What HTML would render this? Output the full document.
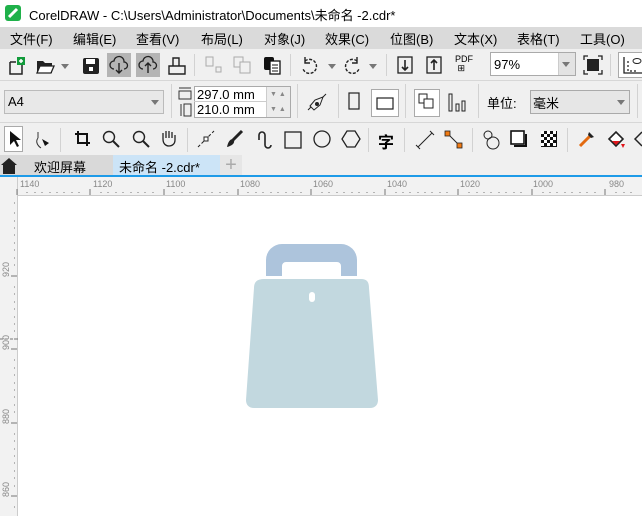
<!DOCTYPE html><html><head><meta charset="utf-8"><style>
*{margin:0;padding:0;box-sizing:border-box}
body{width:642px;height:516px;overflow:hidden;background:#fff;font-family:"Liberation Sans","Noto Sans CJK SC",sans-serif;position:relative;font-size:13px;color:#000}
.a{position:absolute}
.t{font-size:14px}
svg{position:absolute;overflow:visible}
.sep{position:absolute;width:1px;background:#d2d2d2}
.tri{position:absolute;width:0;height:0;border-left:4px solid transparent;border-right:4px solid transparent;border-top:5px solid #777}
.rl{position:absolute;font-size:9px;color:#888;top:178px}
</style></head><body>
<!-- title -->
<div class="a" style="left:0;top:0;width:642px;height:27px;background:#fff"></div>
<div class="a" style="left:5px;top:5px;width:16px;height:16px;background:#1fb14a;border-radius:3px"></div>
<svg style="left:5px;top:5px" width="16" height="16"><path d="M4 12 L12 4" stroke="#fff" stroke-width="3"/></svg>
<div class="a t" style="left:29px;top:5px;font-size:13px">CorelDRAW - C:\Users\Administrator\Documents\未命名 -2.cdr*</div>
<!-- menu -->
<div class="a" style="left:0;top:27px;width:642px;height:22px;background:#dadada"></div>
<div class="a" style="top:29px;left:0;width:642px;font-size:13px">
<span class="a" style="left:10px">文件(F)</span><span class="a" style="left:73px">编辑(E)</span><span class="a" style="left:136px">查看(V)</span><span class="a" style="left:201px">布局(L)</span><span class="a" style="left:264px">对象(J)</span><span class="a" style="left:325px">效果(C)</span><span class="a" style="left:390px">位图(B)</span><span class="a" style="left:454px">文本(X)</span><span class="a" style="left:517px">表格(T)</span><span class="a" style="left:580px">工具(O)</span></div>
<!-- toolbars bg -->
<div class="a" style="left:0;top:49px;width:642px;height:106px;background:#f0f0f0"></div>
<div class="a" style="left:0;top:80px;width:642px;height:1px;background:#d7d7d7"></div>
<div class="a" style="left:0;top:122px;width:642px;height:1px;background:#d7d7d7"></div>
<!-- row1 icons -->
<svg style="left:7px;top:57px" width="18" height="18"><path d="M3 5h6l0 0M3 5v12h12V8" fill="none" stroke="#222" stroke-width="1.5"/><rect x="10" y="0" width="8" height="8" fill="#129b3b"/><path d="M14 2v4M12 4h4" stroke="#fff" stroke-width="1.5"/></svg>
<svg style="left:36px;top:58px" width="20" height="16"><path d="M1 3h6l2 2h7v10H1z" fill="#222"/><path d="M4 8h14l-3 7H1z" fill="#fff" stroke="#222" stroke-width="1.3"/></svg>
<div class="tri" style="left:61px;top:64px"></div>
<svg style="left:82px;top:57px" width="18" height="18"><rect x="1" y="1" width="16" height="16" rx="2" fill="#222"/><rect x="4" y="2" width="9" height="5" fill="#fff"/><rect x="7" y="10" width="4" height="4" fill="#fff"/></svg>
<div class="a" style="left:107px;top:53px;width:24px;height:24px;background:#b4b4b4"></div>
<div class="a" style="left:136px;top:53px;width:24px;height:24px;background:#b4b4b4"></div>
<svg style="left:109px;top:55px" width="20" height="20"><path d="M5 14a4 4 0 0 1 0-8 5 5 0 0 1 10 1 3.5 3.5 0 0 1 0 7" fill="none" stroke="#222" stroke-width="1.3"/><path d="M10 8v10M7 15l3 3 3-3" fill="none" stroke="#222" stroke-width="1.4"/></svg>
<svg style="left:138px;top:55px" width="20" height="20"><path d="M5 14a4 4 0 0 1 0-8 5 5 0 0 1 10 1 3.5 3.5 0 0 1 0 7" fill="none" stroke="#222" stroke-width="1.3"/><path d="M10 18V8M7 11l3-3 3 3" fill="none" stroke="#222" stroke-width="1.4"/></svg>
<svg style="left:168px;top:57px" width="18" height="18"><path d="M5 9V1h6v8M1 17V9h16v8z" fill="none" stroke="#222" stroke-width="1.4"/></svg>
<div class="sep" style="left:194px;top:54px;height:22px"></div>
<svg style="left:206px;top:57px" width="16" height="16"><rect x="0" y="0" width="7" height="9" fill="none" stroke="#aaa"/><rect x="10" y="10" width="5" height="5" fill="none" stroke="#aaa"/></svg>
<svg style="left:234px;top:57px" width="18" height="18"><rect x="0" y="0" width="9" height="10" fill="none" stroke="#aaa"/><rect x="6" y="5" width="10" height="11" fill="#f0f0f0" stroke="#aaa"/></svg>
<svg style="left:263px;top:56px" width="18" height="18"><rect x="1" y="1" width="10" height="13" rx="2" fill="#111"/><rect x="7" y="5" width="10" height="13" fill="#fff" stroke="#111" stroke-width="1.3"/><path d="M9 9h6M9 12h6M9 15h6" stroke="#111"/></svg>
<div class="sep" style="left:290px;top:54px;height:22px"></div>
<svg style="left:300px;top:57px" width="18" height="18"><path d="M5 4a7 7 0 1 1-2 8" fill="none" stroke="#222" stroke-width="1.4" stroke-dasharray="3 1.5"/><path d="M5 0v6h5" fill="none" stroke="#222" stroke-width="1.4"/></svg>
<div class="tri" style="left:328px;top:64px"></div>
<svg style="left:344px;top:57px" width="18" height="18"><path d="M13 4a7 7 0 1 0 2 8" fill="none" stroke="#222" stroke-width="1.4" stroke-dasharray="3 1.5"/><path d="M13 0v6H8" fill="none" stroke="#222" stroke-width="1.4"/></svg>
<div class="tri" style="left:369px;top:64px"></div>
<div class="sep" style="left:386px;top:54px;height:22px"></div>
<svg style="left:397px;top:56px" width="18" height="18"><rect x="1" y="1" width="14" height="16" fill="none" stroke="#222" stroke-width="1.3"/><path d="M8 4v10M5 11l3 3 3-3" fill="none" stroke="#222" stroke-width="1.6"/></svg>
<svg style="left:426px;top:56px" width="18" height="18"><rect x="1" y="1" width="14" height="16" fill="none" stroke="#222" stroke-width="1.3"/><path d="M8 14V4M5 7l3-3 3 3" fill="none" stroke="#222" stroke-width="1.6"/></svg>
<div class="a" style="left:455px;top:55px;font-size:9px;line-height:9px">PDF<br>&nbsp;⊞</div>
<div class="a" style="left:490px;top:52px;width:86px;height:24px;border:1px solid #aaa;background:#fff"></div>
<div class="a" style="left:558px;top:53px;width:17px;height:22px;background:#e3e3e3;border-left:1px solid #ccc"></div>
<div class="tri" style="left:562px;top:62px"></div>
<div class="a" style="left:494px;top:57px;font-size:13px">97%</div>
<svg style="left:584px;top:56px" width="18" height="18"><rect x="3" y="3" width="12" height="12" fill="#222"/><path d="M0 4V0h4M14 0h4v4M18 14v4h-4M4 18H0v-4" fill="none" stroke="#222" stroke-width="1.3"/></svg>
<div class="sep" style="left:610px;top:54px;height:22px"></div>
<div class="a" style="left:618px;top:52px;width:26px;height:26px;border:1px solid #aaa;background:#fff"></div>
<svg style="left:622px;top:56px" width="20" height="18"><path d="M2 1v16h18M5 14h2M5 10h2M5 6h2M9 14v2M13 14v2" fill="none" stroke="#222" stroke-width="1.3"/><ellipse cx="15" cy="5" rx="4" ry="2.5" fill="none" stroke="#222"/></svg>
<!-- row2 -->
<div class="a" style="left:4px;top:90px;width:160px;height:24px;border:1px solid #bbb;background:#e8e8e8"></div>
<div class="a" style="left:8px;top:94px;font-size:13px">A4</div>
<div class="tri" style="left:151px;top:100px"></div>
<div class="sep" style="left:171px;top:84px;height:34px"></div>
<svg style="left:178px;top:87px" width="14" height="30"><path d="M1 1h12M1 4h12v8H1z M3 17v12M6 17h7v12H6z" fill="none" stroke="#333"/></svg>
<div class="a" style="left:194px;top:86px;width:97px;height:32px;border:1px solid #aaa;background:#fff"></div>
<div class="a" style="left:194px;top:101px;width:73px;height:1px;background:#ccc"></div>
<div class="a" style="left:266px;top:87px;width:24px;height:30px;background:#ececec;border-left:1px solid #ccc;font-size:7px;color:#888;line-height:15px;padding-left:3px">▼ ▲<br>▼ ▲</div>
<div class="a" style="left:197px;top:87px;font-size:13px">297.0 mm</div>
<div class="a" style="left:197px;top:102px;font-size:13px">210.0 mm</div>
<div class="sep" style="left:297px;top:84px;height:34px"></div>
<svg style="left:308px;top:94px" width="18" height="18"><path d="M2 12l5-6 8-3-3 8-6 5z" fill="none" stroke="#222"/><circle cx="9" cy="10" r="2" fill="#222"/><path d="M0 16l3-3M14 4l4-4" stroke="#222"/></svg>
<div class="sep" style="left:338px;top:84px;height:34px"></div>
<svg style="left:348px;top:92px" width="14" height="20"><rect x="1" y="1" width="10" height="16" fill="none" stroke="#222" stroke-width="1.2"/></svg>
<div class="a" style="left:371px;top:89px;width:28px;height:28px;border:1px solid #aaa;background:#fff"></div>
<svg style="left:376px;top:97px" width="20" height="14"><rect x="1" y="1" width="16" height="11" fill="none" stroke="#222" stroke-width="1.2"/></svg>
<div class="sep" style="left:405px;top:84px;height:34px"></div>
<div class="a" style="left:414px;top:89px;width:26px;height:28px;border:1px solid #aaa;background:#fff"></div>
<svg style="left:418px;top:93px" width="20" height="20"><rect x="1" y="1" width="8" height="9" fill="#fff" stroke="#222"/><rect x="6" y="6" width="9" height="9" fill="#fff" stroke="#222"/></svg>
<svg style="left:448px;top:93px" width="20" height="20"><rect x="1" y="1" width="3" height="17" fill="none" stroke="#222"/><rect x="8" y="11" width="3" height="7" fill="none" stroke="#222"/><rect x="14" y="8" width="3" height="10" fill="none" stroke="#222"/></svg>
<div class="sep" style="left:478px;top:84px;height:34px"></div>
<div class="a" style="left:487px;top:93px;font-size:13px">单位:</div>
<div class="a" style="left:530px;top:90px;width:100px;height:24px;border:1px solid #aaa;background:#e6e6e6"></div>
<div class="a" style="left:533px;top:93px;font-size:13px">毫米</div>
<div class="tri" style="left:617px;top:100px"></div>
<div class="sep" style="left:637px;top:84px;height:34px"></div>
<!-- row3 toolbox -->
<div class="a" style="left:4px;top:126px;width:19px;height:26px;border:1px solid #aaa;background:#fff"></div>
<svg style="left:9px;top:130px" width="12" height="18"><path d="M1 1v14l4-4 3 6 2-1-3-6h5z" fill="#111"/></svg>
<svg style="left:34px;top:130px" width="20" height="20"><path d="M4 2v6M4 8c-3 4 0 8 3 10" fill="none" stroke="#333"/><path d="M8 9l7 4-4 3z" fill="#111"/></svg>
<div class="sep" style="left:60px;top:128px;height:24px"></div>
<svg style="left:74px;top:130px" width="18" height="18"><path d="M4 1v12h12M1 4h12v12" fill="none" stroke="#111" stroke-width="2"/></svg>
<svg style="left:102px;top:130px" width="18" height="18"><circle cx="7" cy="7" r="5.5" fill="none" stroke="#222" stroke-width="1.4"/><path d="M11 11l6 6" stroke="#222" stroke-width="2"/></svg>
<svg style="left:132px;top:130px" width="18" height="18"><circle cx="7" cy="7" r="5.5" fill="none" stroke="#222" stroke-width="1.4"/><path d="M11 11l6 6" stroke="#222" stroke-width="2"/></svg>
<svg style="left:160px;top:129px" width="18" height="18"><path d="M3 10V4M6 9V2M9 9V2M12 9V3M15 11V6M3 10c0 5 3 7 6 7s6-2 6-6" fill="none" stroke="#222" stroke-width="1.3"/></svg>
<div class="sep" style="left:187px;top:128px;height:24px"></div>
<svg style="left:197px;top:130px" width="18" height="18"><path d="M1 17L17 1" stroke="#222" stroke-dasharray="3 2"/><rect x="7" y="7" width="4" height="4" fill="#fff" stroke="#222"/></svg>
<svg style="left:225px;top:130px" width="18" height="18"><path d="M17 1L8 10" stroke="#222" stroke-width="3"/><path d="M8 9c-3 0-5 3-6 8 4-1 8-3 7-7z" fill="#222"/></svg>
<svg style="left:254px;top:130px" width="18" height="20"><path d="M5 10V5a3 3 0 0 1 6 0v10a3 3 0 0 0 6 0" fill="none" stroke="#222" stroke-width="1.6"/></svg>
<svg style="left:284px;top:131px" width="18" height="18"><rect x="1" y="1" width="16" height="16" fill="none" stroke="#222" stroke-width="1.3"/></svg>
<svg style="left:313px;top:130px" width="20" height="20"><circle cx="9" cy="9" r="8" fill="none" stroke="#222" stroke-width="1.3"/></svg>
<svg style="left:342px;top:130px" width="20" height="20"><path d="M5 1h8l5 8-5 8H5L0 9z" fill="none" stroke="#222" stroke-width="1.3"/></svg>
<div class="sep" style="left:368px;top:128px;height:24px"></div>
<div class="a" style="left:378px;top:129px;font-size:16px;font-weight:bold">字</div>
<div class="sep" style="left:404px;top:128px;height:24px"></div>
<svg style="left:416px;top:131px" width="18" height="18"><path d="M2 16L16 2M0 14l4 4M14 0l4 4" stroke="#222"/></svg>
<svg style="left:445px;top:131px" width="18" height="18"><path d="M3 3l12 12" stroke="#222"/><rect x="0" y="0" width="5" height="5" fill="#f07a12" stroke="#222" stroke-width=".8"/><rect x="12" y="12" width="5" height="5" fill="#f07a12" stroke="#222" stroke-width=".8"/></svg>
<div class="sep" style="left:472px;top:128px;height:24px"></div>
<svg style="left:482px;top:130px" width="20" height="20"><circle cx="6" cy="5" r="4" fill="none" stroke="#222"/><circle cx="11" cy="13" r="6" fill="none" stroke="#222"/></svg>
<svg style="left:511px;top:131px" width="18" height="18"><rect x="0" y="0" width="13" height="13" fill="#fff" stroke="#111" stroke-width="1.6"/><path d="M15 3v12H3" fill="none" stroke="#111" stroke-width="2"/></svg>
<svg style="left:541px;top:131px" width="16" height="16"><rect width="16" height="16" fill="#111"/><path d="M0 0h3v3H0zM6 0h3v3H6zM12 0h3v3h-3zM3 3h3v3H3zM9 3h3v3H9zM0 6h3v3H0zM6 6h3v3H6zM12 6h3v3h-3zM3 9h3v3H3zM9 9h3v3H9zM0 12h3v3H0zM6 12h3v3H6zM12 12h3v3h-3z" fill="#fff"/></svg>
<div class="sep" style="left:567px;top:128px;height:24px"></div>
<svg style="left:578px;top:130px" width="18" height="18"><path d="M12 6L2 16" stroke="#e36a10" stroke-width="3"/><path d="M11 2l5 5-3 1-3-3z" fill="#222"/></svg>
<svg style="left:607px;top:130px" width="20" height="20"><path d="M2 9l7-7 7 7-7 7z" fill="#fff" stroke="#222" stroke-width="1.6"/><path d="M5 11h8l-4 4z" fill="#e0161b"/><path d="M14 14l4 0-2 4z" fill="#e0161b"/></svg>
<svg style="left:634px;top:130px" width="10" height="20"><path d="M8 2L1 9l7 7" fill="none" stroke="#222" stroke-width="1.5"/></svg>
<!-- tabs -->
<div class="a" style="left:0;top:155px;width:642px;height:21px;background:#f0f0f0"></div>
<div class="a" style="left:0;top:155px;width:113px;height:21px;background:#d9d9d9"></div>
<svg style="left:1px;top:157px" width="16" height="17"><path d="M0 8L8 1l8 7h-2v9H2V8z" fill="#222"/></svg>
<div class="a" style="left:34px;top:157px;font-size:13px">欢迎屏幕</div>
<div class="a" style="left:113px;top:155px;width:107px;height:21px;background:#cce4f7"></div>
<div class="a" style="left:119px;top:157px;font-size:13px">未命名 -2.cdr*</div>
<div class="a" style="left:220px;top:155px;width:22px;height:21px;background:#e6e6e6;color:#aaa;font-size:20px;text-align:center;line-height:20px">+</div>
<div class="a" style="left:0;top:175px;width:642px;height:2px;background:#1e9be8"></div>
<!-- rulers -->
<div class="a" style="left:0;top:177px;width:642px;height:19px;background:#f2f2f2;border-bottom:1px solid #ccc"></div>
<div class="a" style="left:0;top:177px;width:18px;height:339px;background:#f2f2f2;border-right:1px solid #ccc"></div>
<svg style="left:0;top:177px" width="642" height="339">
<g stroke="#777" stroke-width="1">
<path d="M17 12v6M90 12v6M164 12v6M238 12v6M311 12v6M385 12v6M458 12v6M532 12v6M605 12v6"/>
<path d="M27 15v1M35 15v1M42 15v1M50 15v1M57 15v1M64 15v1M72 15v1M79 15v1M101 15v1M108 15v1M116 15v1M123 15v1M131 15v1M138 15v1M145 15v1M153 15v1M174 15v1M182 15v1M190 15v1M197 15v1M205 15v1M212 15v1M220 15v1M227 15v1M248 15v1M256 15v1M263 15v1M271 15v1M278 15v1M286 15v1M293 15v1M301 15v1M322 15v1M329 15v1M337 15v1M344 15v1M352 15v1M359 15v1M367 15v1M374 15v1M396 15v1M403 15v1M410 15v1M418 15v1M425 15v1M432 15v1M440 15v1M447 15v1M469 15v1M477 15v1M484 15v1M491 15v1M499 15v1M506 15v1M514 15v1M521 15v1M543 15v1M550 15v1M557 15v1M565 15v1M572 15v1M580 15v1M587 15v1M595 15v1M616 15v1M624 15v1M631 15v1"/>
<path d="M11 99h6M11 172h6M11 246h6M11 319h6"/>
<path d="M14 26h1M14 36h1M14 44h1M14 51h1M14 58h1M14 66h1M14 73h1M14 81h1M14 88h1M14 110h1M14 117h1M14 125h1M14 132h1M14 140h1M14 147h1M14 154h1M14 162h1M14 183h1M14 191h1M14 198h1M14 206h1M14 213h1M14 220h1M14 228h1M14 235h1M14 257h1M14 264h1M14 272h1M14 279h1M14 286h1M14 294h1M14 301h1M14 309h1M14 330h1"/>
<path d="M0 162h18" stroke-dasharray="3 2"/>
</g>
<g font-size="9" fill="#888" font-family="Liberation Sans">
<text x="20" y="10">1140</text><text x="93" y="10">1120</text><text x="166" y="10">1100</text><text x="240" y="10">1080</text><text x="313" y="10">1060</text><text x="387" y="10">1040</text><text x="460" y="10">1020</text><text x="533" y="10">1000</text><text x="609" y="10">980</text>
<text transform="translate(9 100) rotate(-90)">920</text><text transform="translate(9 173) rotate(-90)">900</text><text transform="translate(9 247) rotate(-90)">880</text><text transform="translate(9 320) rotate(-90)">860</text>
</g></svg>
<!-- bag -->
<svg style="left:0;top:0" width="642" height="516">
<path d="M266 276V260a16 16 0 0 1 16-16h59a16 16 0 0 1 16 16v16h-16v-10a4 4 0 0 0-4-4h-51a4 4 0 0 0-4 4v10z" fill="#adc4dc"/>
<path d="M264 279h97c6 0 8 3 8 9l9 112c0 5-3 8-8 8H254c-5 0-8-3-8-8l8-112c0-6 3-9 10-9z" fill="#c2d8df"/>
<rect x="309" y="292" width="6" height="10" rx="3" fill="#fff"/>
</svg>
</body></html>
